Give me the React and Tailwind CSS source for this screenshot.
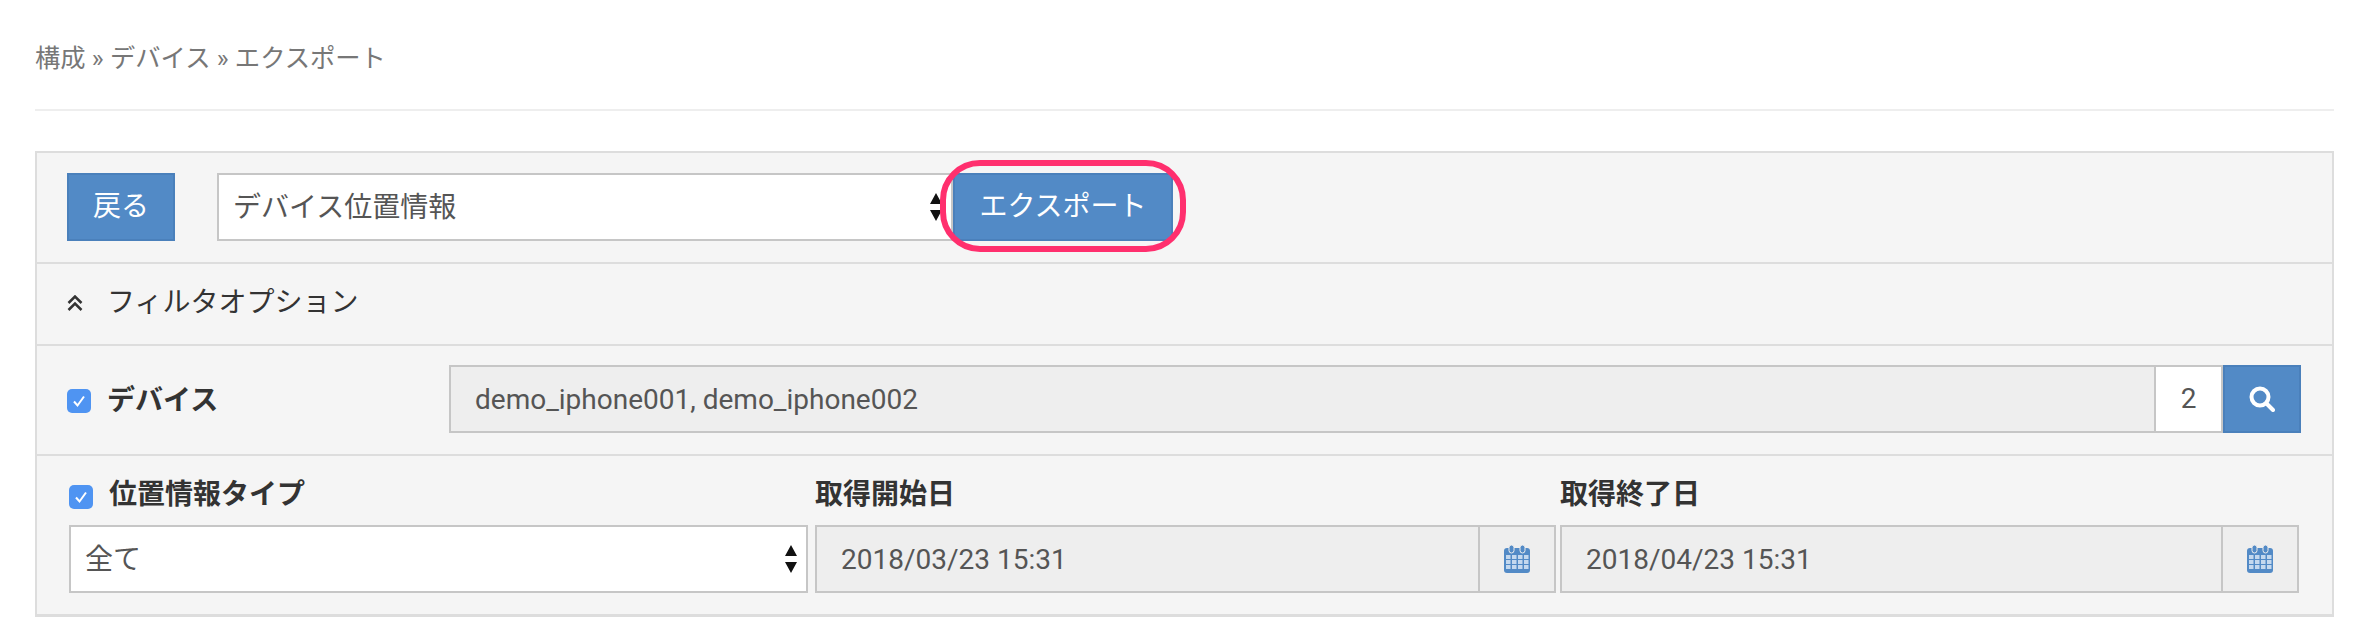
import React from 'react';

const font = { fontFamily: 'Roboto, "Noto Sans CJK JP", sans-serif' };

function CheckBox({ className = '' }) {
  return (
    <span className={`flex h-6 w-6 shrink-0 items-center justify-center rounded-[5px] bg-[#4f94f2] ${className}`}>
      <svg width="16" height="16" viewBox="0 0 16 16" fill="none">
        <path d="M3 8.5 L6.5 12.5 L13 3.5" stroke="#fff" strokeWidth="2" />
      </svg>
    </span>
  );
}

function SelectArrows() {
  return (
    <svg className="pointer-events-none absolute right-[10px] top-1/2 -translate-y-1/2" width="14" height="30" viewBox="0 0 14 30">
      <path d="M7 1 L13 12 L1 12 Z M7 29 L13 18 L1 18 Z" fill="#111" />
    </svg>
  );
}

function NativeSelect({ value, className = '' }) {
  return (
    <div className={`relative h-[68px] ${className}`}>
      <select
        defaultValue={value}
        className="h-full w-full appearance-none rounded-none border-2 border-[#c6c6c6] bg-white pl-[14px] pt-[2px] text-[28px] text-[#555] outline-none"
      >
        <option>{value}</option>
      </select>
      <SelectArrows />
    </div>
  );
}

function CalendarIcon() {
  return (
    <svg width="26" height="28" viewBox="0 0 26 28">
      <rect x="0" y="3" width="26" height="25" rx="3" fill="#528ac6" />
      <rect x="5" y="0" width="5" height="8" rx="2.5" fill="#528ac6" stroke="#eee" strokeWidth="1" />
      <rect x="16" y="0" width="5" height="8" rx="2.5" fill="#528ac6" stroke="#eee" strokeWidth="1" />
      {[2, 8, 14, 20].map((x) =>
        [10, 15, 20].map((y) => <rect key={`${x}-${y}`} x={x} y={y} width="4.5" height="4" fill="#c4d8ee" />)
      )}
    </svg>
  );
}

function DateField({ label, value, className = '' }) {
  return (
    <div className={className}>
      <div className="flex h-[69px] items-start pt-[23px] text-[28px] leading-[32px] font-bold text-[#333]">{label}</div>
      <div className="flex h-[68px] border-2 border-[#c6c6c6] bg-[#eee]">
        <div className="flex flex-1 items-center pl-[24px] pt-[2px] text-[28px] text-[#555]">{value}</div>
        <div className="flex w-[76px] items-center justify-center border-l-2 border-[#c6c6c6]">
          <CalendarIcon />
        </div>
      </div>
    </div>
  );
}

export default function App() {
  return (
    <div className="h-[617px] overflow-hidden bg-white pl-[35px] pr-[45px]" style={font}>
      <div className="flex h-[111px] items-center border-b-2 border-[#eee] pt-[8px] text-[25.3px] text-[#777]">
        構成 » デバイス » エクスポート
      </div>

      <div className="mt-[40px] border-2 border-[#ddd] bg-[#f5f5f5]">
        {/* toolbar */}
        <div className="flex h-[111px] items-start border-b-2 border-[#ddd] pl-[30px] pt-[20px]">
          <button className="h-[68px] w-[108px] border-2 border-[#4a80bb] bg-[#528ac6] text-[28px] text-white">戻る</button>
          <NativeSelect value="デバイス位置情報" className="ml-[42px] w-[736px]" />
          <div className="relative">
            <button className="h-[68px] w-[220px] border-2 border-[#4a80bb] bg-[#528ac6] text-[28px] text-white">エクスポート</button>
            <div className="pointer-events-none absolute -inset-x-[13px] -bottom-[11px] -top-[13px] rounded-[40px] border-[6px] border-[#ff2f6e]" />
          </div>
        </div>

        {/* filter toggle */}
        <div className="flex h-[82px] items-center gap-[24px] border-b-2 border-[#ddd] pb-[2px] pl-[30px] text-[28px] text-[#333]">
          <svg width="16" height="16" viewBox="0 0 16 16" fill="none" stroke="#333" strokeWidth="2.5">
            <path d="M1.5 8 L8 1.5 L14.5 8 M1.5 15 L8 8.5 L14.5 15" />
          </svg>
          <span>フィルタオプション</span>
        </div>

        {/* device */}
        <div className="flex h-[110px] items-start border-b-2 border-[#ddd] pl-[30px] pt-[19px]">
          <div className="flex h-[68px] w-[382px] items-center gap-[16px] pt-[3px] text-[28px] font-bold text-[#333]">
            <CheckBox />
            デバイス
          </div>
          <div className="flex h-[68px] w-[1707px] items-center border-2 border-[#c6c6c6] bg-[#eee] pl-[24px] pt-[2px] text-[28px] text-[#555]">
            demo_iphone001, demo_iphone002
          </div>
          <div className="flex h-[68px] w-[67px] items-center justify-center border-y-2 border-r-2 border-[#c6c6c6] bg-white text-[28px] text-[#555]">
            2
          </div>
          <button className="flex h-[68px] w-[78px] items-center justify-center border-2 border-[#4a80bb] bg-[#528ac6]">
            <svg width="26" height="26" viewBox="0 0 26 26" fill="none" stroke="#fff">
              <circle cx="11" cy="11" r="8.5" strokeWidth="4" />
              <path d="M17.5 17.5 L24 24" strokeWidth="4" strokeLinecap="round" />
            </svg>
          </button>
        </div>

        {/* position type + dates */}
        <div className="grid h-[160px] grid-cols-[746px_745px_739px] border-b-2 border-[#ddd] pl-[32px] pr-[33px]">
          <div className="w-[739px]">
            <div className="flex h-[69px] items-start gap-[16px] pt-[23px] text-[28px] leading-[32px] font-bold text-[#333]">
              <CheckBox className="mt-[6px]" />
              位置情報タイプ
            </div>
            <NativeSelect value="全て" />
          </div>
          <DateField label="取得開始日" value="2018/03/23 15:31" className="w-[741px]" />
          <DateField label="取得終了日" value="2018/04/23 15:31" />
        </div>
      </div>
    </div>
  );
}
